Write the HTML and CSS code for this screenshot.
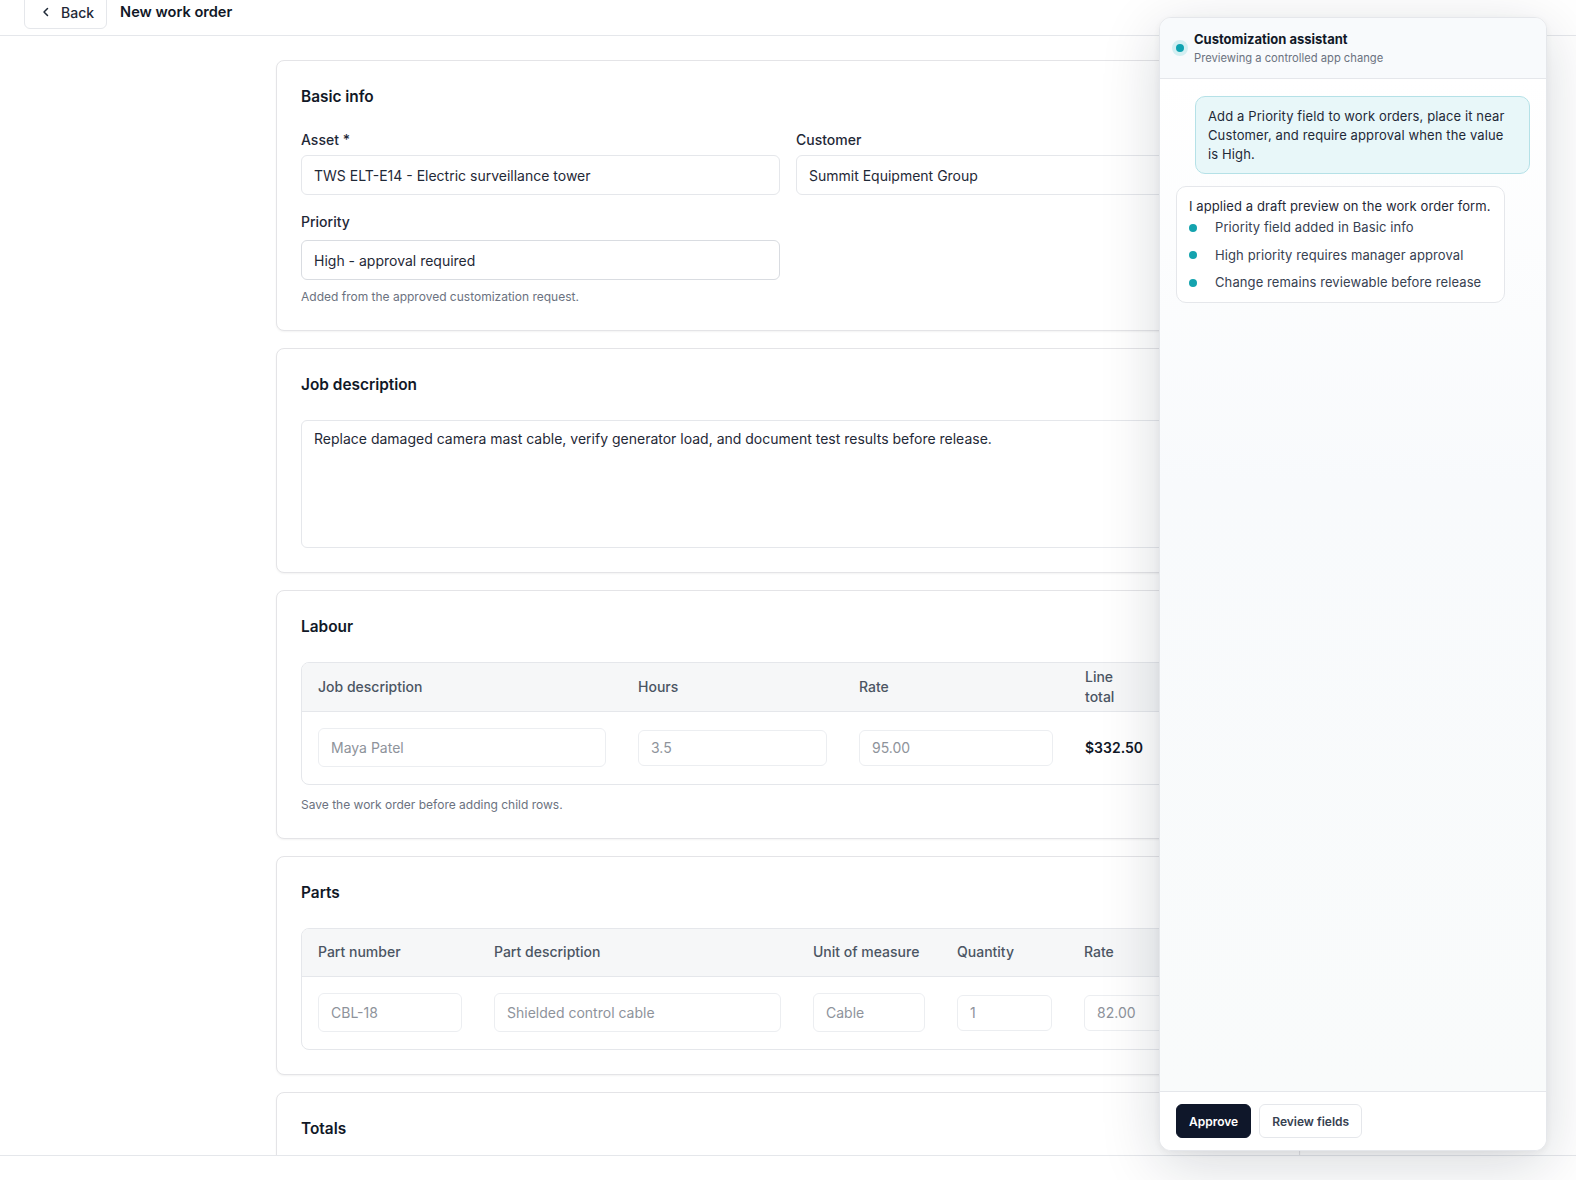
FILE: index.html
```html
<!DOCTYPE html>
<html>
<head>
	<meta charset="UTF-8">
	<title>New work order</title>
	<link rel="stylesheet" href="styles.css">
</head>
<body>

	<div class="topbar">
		<button class="back_btn">
			<svg width="10" height="10" viewBox="0 0 10 10"><path d="M6.5 1.5 L3 5 L6.5 8.5" fill="none" stroke="#1f2937" stroke-width="1.5" stroke-linecap="round" stroke-linejoin="round"/></svg>
			<span>Back</span>
		</button>
		<div class="page_title">New work order</div>
	</div>

	<div class="main">
		<div class="cards">

			<div class="card">
				<h2>Basic info</h2>
				<div class="form_grid">
					<div class="field">
						<label>Asset *</label>
						<input class="inp" type="text" value="TWS ELT-E14 - Electric surveillance tower">
					</div>
					<div class="field">
						<label>Customer</label>
						<input class="inp" type="text" value="Summit Equipment Group">
					</div>
					<div class="field field_new">
						<label>Priority</label>
						<input class="inp" type="text" value="High - approval required">
						<p class="help">Added from the approved customization request.</p>
					</div>
				</div>
			</div>

			<div class="card">
				<h2>Job description</h2>
				<textarea class="desc">Replace damaged camera mast cable, verify generator load, and document test results before release.</textarea>
			</div>

			<div class="card">
				<h2>Labour</h2>
				<div class="tbl_wrap">
					<table class="tbl">
						<colgroup>
							<col style="width:320px">
							<col style="width:221px">
							<col style="width:226px">
							<col style="width:84px">
							<col>
						</colgroup>
						<thead>
							<tr><th>Job description</th><th>Hours</th><th>Rate</th><th>Line total</th><th></th></tr>
						</thead>
						<tbody>
							<tr>
								<td><input class="cell_inp tall" type="text" placeholder="Maya Patel"></td>
								<td><input class="cell_inp" type="text" placeholder="3.5"></td>
								<td><input class="cell_inp" type="text" placeholder="95.00"></td>
								<td class="amount">$332.50</td>
								<td></td>
							</tr>
						</tbody>
					</table>
				</div>
				<p class="help help_table">Save the work order before adding child rows.</p>
			</div>

			<div class="card">
				<h2>Parts</h2>
				<div class="tbl_wrap">
					<table class="tbl">
						<colgroup>
							<col style="width:176px">
							<col style="width:319px">
							<col style="width:144px">
							<col style="width:127px">
							<col>
						</colgroup>
						<thead>
							<tr><th>Part number</th><th>Part description</th><th>Unit of measure</th><th>Quantity</th><th>Rate</th></tr>
						</thead>
						<tbody>
							<tr>
								<td><input class="cell_inp tall" type="text" placeholder="CBL-18"></td>
								<td><input class="cell_inp tall" type="text" placeholder="Shielded control cable"></td>
								<td><input class="cell_inp tall" type="text" placeholder="Cable"></td>
								<td><input class="cell_inp" type="text" placeholder="1"></td>
								<td><input class="cell_inp" type="text" placeholder="82.00"></td>
							</tr>
						</tbody>
					</table>
				</div>
			</div>

			<div class="card">
				<h2>Totals</h2>
			</div>

		</div>
	</div>

	<div class="bottombar"></div>

	<!-- assistant floats over the form -->
	<div class="assistant">
		<div class="as_head">
			<span class="as_dot"></span>
			<div>
				<div class="as_title">Customization assistant</div>
				<div class="as_sub">Previewing a controlled app change</div>
			</div>
		</div>
		<div class="as_body">
			<div class="msg_user">Add a Priority field to work orders, place it near Customer, and require approval when the value is High.</div>
			<div class="msg_bot">
				<div class="bot_lead">I applied a draft preview on the work order form.</div>
				<ul>
					<li>Priority field added in Basic info</li>
					<li>High priority requires manager approval</li>
					<li>Change remains reviewable before release</li>
				</ul>
			</div>
		</div>
		<div class="as_foot">
			<button class="btn_dark">Approve</button>
			<button class="btn_light">Review fields</button>
		</div>
	</div>

</body>
</html>
```

FILE: styles.css
```css
* {
	box-sizing: border-box;
}

body {
	margin: 0;
	height: 1180px;
	overflow: hidden;
	background: #fff;
	font-family: Inter, "Noto Sans", sans-serif;
	color: #1f2937;
}

/* top bar */
.topbar {
	height: 36px;
	border-bottom: 1px solid #e5e7eb;
	display: flex;
	align-items: flex-end;
	gap: 13px;
	padding: 0 24px;
}

.back_btn {
	height: 38px;
	margin-bottom: 6px;
	padding: 4px 12px 0 16px;
	display: flex;
	align-items: center;
	gap: 10px;
	background: #fff;
	border: 1px solid #e5e7eb;
	border-radius: 0 0 6px 6px;
	font-family: inherit;
	font-size: 14px;
	font-weight: 500;
	color: #1f2937;
}

.page_title {
	font-size: 14.6px;
	font-weight: 600;
	line-height: 20px;
	color: #111827;
	margin-bottom: 13px;
}

/* form area */
.main {
	height: 1119px;
	overflow: hidden;
	padding-top: 24px;
}

.cards {
	width: 1024px;
	margin: 0 auto;
	display: flex;
	flex-direction: column;
	gap: 17px;
}

.card {
	background: #fff;
	border: 1px solid #e4e4e7;
	border-radius: 8px;
	padding: 24px;
	box-shadow: 0 1px 2px rgba(0, 0, 0, 0.05);
}

.card h2 {
	margin: 0;
	font-size: 15.4px;
	font-weight: 600;
	line-height: 24px;
	color: #111827;
}

.form_grid {
	display: grid;
	grid-template-columns: 1fr 1fr;
	column-gap: 16px;
	row-gap: 17px;
	margin-top: 21px;
}

.field label {
	display: block;
	font-size: 14px;
	font-weight: 500;
	line-height: 20px;
	color: #1f2937;
}

.inp {
	display: block;
	width: 100%;
	height: 40px;
	margin-top: 5px;
	padding: 0 12px;
	border: 1px solid #e5e7eb;
	border-radius: 6px;
	font-family: inherit;
	font-size: 14px;
	color: #1f2937;
	background: #fff;
}

.field_new .inp {
	margin-top: 8px;
	border-color: #d9dce1;
}

.help {
	margin: 8px 0 0;
	font-size: 12px;
	line-height: 18px;
	color: #6b7280;
}

.desc {
	display: block;
	width: 100%;
	height: 128px;
	margin-top: 23px;
	padding: 8px 12px;
	border: 1px solid #e5e7eb;
	border-radius: 6px;
	font-family: inherit;
	font-size: 14px;
	line-height: 20px;
	color: #1f2937;
	resize: none;
}

/* child tables */
.tbl_wrap {
	margin-top: 23px;
	border: 1px solid #e5e7eb;
	border-radius: 8px;
	overflow: hidden;
}

.tbl {
	width: 100%;
	border-collapse: collapse;
	table-layout: fixed;
}

.tbl th {
	height: 48px;
	padding: 4px 16px;
	background: #f6f7f8;
	border-bottom: 1px solid #e5e7eb;
	text-align: left;
	font-size: 14px;
	font-weight: 500;
	line-height: 20px;
	color: #4b5563;
	vertical-align: middle;
}

.tbl td {
	height: 72px;
	padding: 0 16px;
	vertical-align: middle;
	white-space: nowrap;
}

.cell_inp {
	display: block;
	width: 100%;
	height: 36px;
	padding: 0 12px;
	border: 1px solid #eceef1;
	border-radius: 6px;
	font-family: inherit;
	font-size: 14px;
	color: #1f2937;
	background: #fff;
}

.cell_inp.tall {
	height: 39px;
}

.cell_inp::placeholder {
	color: #8e939b;
}

.amount {
	font-size: 14px;
	font-weight: 600;
	color: #111827;
}

.help_table {
	margin-top: 11px;
}

.bottombar {
	height: 25px;
	border-top: 1px solid #e5e7eb;
	background: #fff;
}

/* assistant panel */
.assistant {
	position: fixed;
	top: 17px;
	right: 29px;
	width: 388px;
	height: 1134px;
	display: flex;
	flex-direction: column;
	background: #fff;
	border: 1px solid #e5e7eb;
	border-radius: 12px;
	overflow: hidden;
	box-shadow: 0 14px 60px rgba(15, 23, 42, 0.16), 0 2px 8px rgba(15, 23, 42, 0.06);
}

.as_head {
	display: flex;
	align-items: center;
	gap: 6px;
	padding: 12px 12px;
	background: #f8fafc;
	border-bottom: 1px solid #e5e7eb;
}

.as_dot {
	width: 16px;
	height: 16px;
	border-radius: 50%;
	background: #0fa3b1;
	border: 4px solid #d3eff2;
	flex: none;
}

.as_title {
	font-size: 13px;
	font-weight: 700;
	line-height: 18px;
	color: #111827;
}

.as_sub {
	margin-top: 2px;
	font-size: 11.2px;
	line-height: 16px;
	color: #6b7280;
}

.as_body {
	flex: 1;
	padding: 17px 16px;
	background: linear-gradient(#fff, #f8fafc 40%, #f9fbfb);
	display: flex;
	flex-direction: column;
	align-items: flex-start;
	gap: 12px;
}

.msg_user {
	align-self: flex-end;
	width: 335px;
	padding: 10px 12px 9px;
	background: #e8f7f9;
	border: 1px solid #b5e1e7;
	border-radius: 10px;
	font-size: 13px;
	line-height: 19px;
	letter-spacing: 0.12px;
	color: #1f2937;
}

.msg_bot {
	width: 329px;
	padding: 10px 12px 10px;
	background: #fff;
	border: 1px solid #e5e7eb;
	border-radius: 10px;
	font-size: 13px;
	line-height: 19px;
	letter-spacing: 0.1px;
	color: #1f2937;
}

.bot_lead {
	white-space: nowrap;
}

.msg_bot ul {
	list-style: none;
	margin: 2px 0 0;
	padding: 0;
}

.msg_bot li {
	display: flex;
	align-items: center;
	gap: 18px;
	color: #374151;
	margin-top: 8.5px;
}

.msg_bot li:first-child {
	margin-top: 0;
}

.msg_bot li::before {
	content: "";
	width: 8px;
	height: 8px;
	border-radius: 50%;
	background: #14a3ae;
	flex: none;
}

.as_foot {
	display: flex;
	gap: 8px;
	padding: 12px 16px;
	border-top: 1px solid #e5e7eb;
	background: #fff;
}

.btn_dark,
.btn_light {
	height: 34px;
	padding: 0 12px;
	border-radius: 6px;
	font-family: inherit;
	font-size: 12px;
	font-weight: 600;
}

.btn_dark {
	background: #0f172a;
	border: 1px solid #0f172a;
	color: #fff;
}

.btn_light {
	background: #fff;
	border: 1px solid #e5e7eb;
	color: #374151;
}
```
